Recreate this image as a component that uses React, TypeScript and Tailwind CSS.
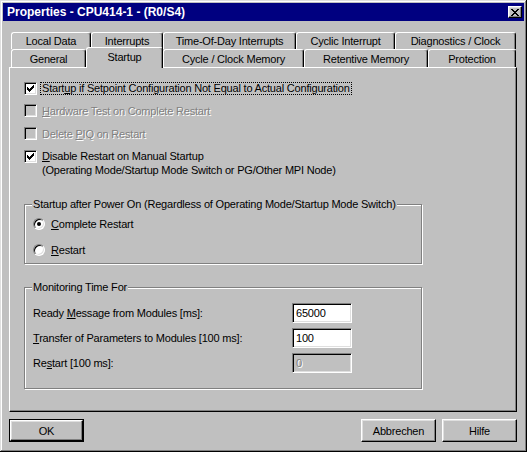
import React from "react";

const sunken =
  "border border-t-[#808080] border-l-[#808080] border-r-white border-b-white shadow-[inset_1px_1px_0_#000,inset_-1px_-1px_0_#dfdfdf]";
const raised =
  "border border-t-white border-l-white border-r-black border-b-black shadow-[inset_-1px_-1px_0_#808080,inset_1px_1px_0_#dfdfdf]";
const disabledText = "text-[#808080] [text-shadow:1px_1px_0_#fff]";

function U({ children }: { children: React.ReactNode }) {
  return <span className="underline decoration-1 underline-offset-[1px]">{children}</span>;
}

function Check({ checked, disabled }: { checked?: boolean; disabled?: boolean }) {
  return (
    <div
      className={`w-[13px] h-[13px] shrink-0 flex items-center justify-center ${sunken} ${
        disabled ? "bg-[#c0c0c0]" : "bg-white"
      }`}
    >
      {checked && (
        <svg width="7" height="7" viewBox="0 0 7 7" shapeRendering="crispEdges">
          <rect x="0" y="2" width="1" height="3" fill="#000" />
          <rect x="1" y="3" width="1" height="3" fill="#000" />
          <rect x="2" y="4" width="1" height="3" fill="#000" />
          <rect x="3" y="3" width="1" height="3" fill="#000" />
          <rect x="4" y="2" width="1" height="3" fill="#000" />
          <rect x="5" y="1" width="1" height="3" fill="#000" />
          <rect x="6" y="0" width="1" height="3" fill="#000" />
        </svg>
      )}
    </div>
  );
}

function Radio({ checked }: { checked?: boolean }) {
  return (
    <div className="w-[12px] h-[12px] shrink-0 rounded-full bg-white border border-t-[#808080] border-l-[#808080] border-r-white border-b-white shadow-[inset_1px_1px_0_#000,inset_-1px_-1px_0_#dfdfdf] flex items-center justify-center">
      {checked && <div className="w-[4px] h-[4px] rounded-full bg-black" />}
    </div>
  );
}

const row1 = [
  { label: "Local Data", w: "w-[80px]" },
  { label: "Interrupts", w: "w-[72px]" },
  { label: "Time-Of-Day Interrupts", w: "w-[133px]" },
  { label: "Cyclic Interrupt", w: "w-[99px]" },
  { label: "Diagnostics / Clock", w: "w-[121px]" },
];

const row2 = [
  { label: "General", w: "w-[75px]" },
  { label: "Startup", w: "w-[77px]", sel: true },
  { label: "Cycle / Clock Memory", w: "w-[141px]" },
  { label: "Retentive Memory", w: "w-[124px]" },
  { label: "Protection", w: "w-[88px]" },
];

const tabBase =
  "flex items-center justify-center bg-[#c0c0c0] border-t border-l border-r border-t-white border-l-white border-r-black rounded-tl-[3px] rounded-tr-[3px] shadow-[inset_-1px_0_0_#808080]";

function Field({ value, disabled }: { value: string; disabled?: boolean }) {
  return (
    <div
      className={`w-[60px] h-[20px] flex items-center px-[3px] ${sunken} ${
        disabled ? `bg-[#c0c0c0] ${disabledText}` : "bg-white"
      }`}
    >
      {value}
    </div>
  );
}

function Button({ children, isDefault }: { children: React.ReactNode; isDefault?: boolean }) {
  if (isDefault) {
    return (
      <div className="w-[75px] h-[23px] border border-black">
        <div className={`w-full h-full flex items-center justify-center ${raised}`}>{children}</div>
      </div>
    );
  }
  return (
    <div className={`w-[75px] h-[23px] flex items-center justify-center ${raised}`}>{children}</div>
  );
}

export default function App() {
  return (
    <div className="w-[527px] h-[452px] bg-[#c0c0c0] p-[3px] text-[11px] leading-[14px] tracking-[-0.2px] text-black font-['Liberation_Sans',Arial,sans-serif] shadow-[inset_-1px_-1px_0_#000,inset_1px_1px_0_#dfdfdf,inset_-2px_-2px_0_#808080,inset_2px_2px_0_#fff] select-none">
      {/* title bar */}
      <div className="h-[18px] bg-[#000080] flex items-center justify-between pl-[4px] pr-[2px]">
        <span className="text-white font-bold text-[12px] tracking-normal">Properties - CPU414-1 - (R0/S4)</span>
        <div className={`w-[14px] h-[12px] bg-[#c0c0c0] flex items-center justify-center ${raised}`}>
          <svg width="8" height="7" viewBox="0 0 8 7" shapeRendering="crispEdges">
            <path d="M0 0h2v1h1v1h2v-1h1v-1h2v1h-1v1h-1v1h-1v1h1v1h1v1h1v1h-2v-1h-1v-1h-2v1h-1v1h-2v-1h1v-1h1v-1h1v-1h-1v-1h-1v-1h-1z" fill="#000" />
          </svg>
        </div>
      </div>

      <div className="px-[6px] mt-[11px]">
        {/* tabs */}
        <div className="flex h-[17px] ml-[2px]">
          {row1.map((t) => (
            <div key={t.label} className={`${t.w} h-[17px] ${tabBase}`}>
              {t.label}
            </div>
          ))}
        </div>
        <div className="flex h-[18px] ml-[2px] items-end">
          {row2.map((t) =>
            t.sel ? (
              <div key={t.label} className={`${t.w} h-[21px] -mb-px relative z-10 pb-[2px] ${tabBase}`}>
                {t.label}
              </div>
            ) : (
              <div key={t.label} className={`${t.w} h-[18px] ${tabBase}`}>
                {t.label}
              </div>
            )
          )}
        </div>

        {/* panel */}
        <div className="w-[508px] h-[345px] border border-t-white border-l-white border-r-black border-b-black shadow-[inset_-1px_-1px_0_#808080] pl-[14px] pt-[14px] flex flex-col">
          <div className="flex items-center h-[13px]">
            <Check checked />
            <span className="ml-[3px] border border-dotted border-black px-[1px] leading-[11px]">
              Start<U>u</U>p if Setpoint Configuration Not Equal to Actual Configuration
            </span>
          </div>
          <div className="flex items-center h-[13px] mt-[9px]">
            <Check disabled />
            <span className={`ml-[5px] ${disabledText}`}>
              <U>H</U>ardware Test on Complete Restart
            </span>
          </div>
          <div className="flex items-center h-[13px] mt-[10px]">
            <Check disabled />
            <span className={`ml-[5px] ${disabledText}`}>
              Delete <U>P</U>IQ on Restart
            </span>
          </div>
          <div className="flex items-start mt-[10px]">
            <Check checked />
            <div className="ml-[5px] -mt-[1px]">
              <div>
                <U>D</U>isable Restart on Manual Startup
              </div>
              <div>(Operating Mode/Startup Mode Switch or PG/Other MPI Node)</div>
            </div>
          </div>

          <fieldset className="w-[398px] mt-[20px] border border-[#808080] shadow-[inset_1px_1px_0_#fff,1px_1px_0_#fff] px-[8px] pb-[7px]">
            <legend className="-ml-[1px] px-[1px] bg-[#c0c0c0] leading-[14px]">
              Startup after Power On (Regardless of Operating Mode/Startup Mode Switch)
            </legend>
            <div className="flex items-center h-[12px] mt-[7px]">
              <Radio checked />
              <span className="ml-[6px]">
                <U>C</U>omplete Restart
              </span>
            </div>
            <div className="flex items-center h-[12px] mt-[14px]">
              <Radio />
              <span className="ml-[6px]">
                <U>R</U>estart
              </span>
            </div>
          </fieldset>

          <fieldset className="w-[398px] mt-[16px] border border-[#808080] shadow-[inset_1px_1px_0_#fff,1px_1px_0_#fff] px-[8px] pb-[15px]">
            <legend className="-ml-[1px] px-[1px] bg-[#c0c0c0] leading-[14px]">Monitoring Time For</legend>
            <div className="flex items-center h-[20px] mt-[9px]">
              <span className="w-[259px]">
                Ready <U>M</U>essage from Modules [ms]:
              </span>
              <Field value="65000" />
            </div>
            <div className="flex items-center h-[20px] mt-[5px]">
              <span className="w-[259px]">
                <U>T</U>ransfer of Parameters to Modules [100 ms]:
              </span>
              <Field value="100" />
            </div>
            <div className="flex items-center h-[20px] mt-[5px]">
              <span className="w-[259px]">
                Re<U>s</U>tart [100 ms]:
              </span>
              <Field value="0" disabled />
            </div>
          </fieldset>
        </div>

        {/* buttons */}
        <div className="w-[508px] flex mt-[7px]">
          <Button isDefault>OK</Button>
          <div className="ml-auto">
            <Button>Abbrechen</Button>
          </div>
          <div className="ml-[6px]">
            <Button>Hilfe</Button>
          </div>
        </div>
      </div>
    </div>
  );
}
